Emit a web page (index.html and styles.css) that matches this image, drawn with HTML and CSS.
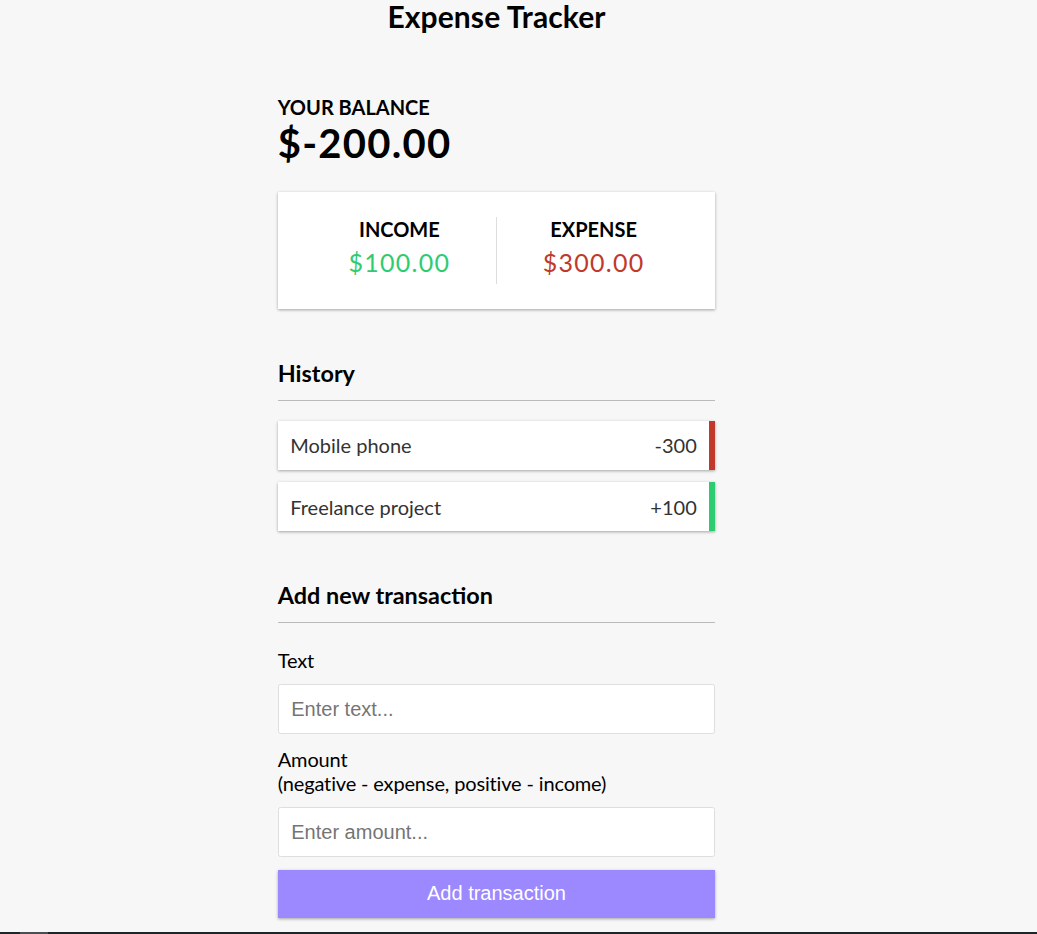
FILE: index.html
```html
<!DOCTYPE html>
<html lang="en">
<head>
<meta charset="utf-8">
<title>Expense Tracker</title>
<link rel="stylesheet" href="styles.css">
</head>
<body>
<div class="app">
  <h2 class="title">Expense Tracker</h2>
  <div class="container">
    <h4 class="caption">Your Balance</h4>
    <h1 class="balance">$-200.00</h1>

    <div class="inc-exp">
      <div class="inc-exp-col first">
        <h4 class="caption">Income</h4>
        <p class="money plus">$100.00</p>
      </div>
      <div class="inc-exp-col">
        <h4 class="caption">Expense</h4>
        <p class="money minus">$300.00</p>
      </div>
    </div>

    <h3 class="section-title">History</h3>
    <ul class="list">
      <li class="item minus"><span>Mobile phone</span><span>-300</span></li>
      <li class="item plus"><span>Freelance project</span><span>+100</span></li>
    </ul>

    <h3 class="section-title">Add new transaction</h3>
    <form class="form">
      <div class="form-control">
        <label class="label" for="text">Text</label>
        <input class="field" type="text" id="text" placeholder="Enter text...">
      </div>
      <div class="form-control">
        <label class="label" for="amount">Amount <br>(negative - expense, positive - income)</label>
        <input class="field" type="number" id="amount" placeholder="Enter amount...">
      </div>
      <button class="btn" type="button">Add transaction</button>
    </form>
  </div>
</div>
<div class="taskbar"><span class="taskbar-item"></span></div>
</body>
</html>
```

FILE: styles.css
```css
* {
  box-sizing: border-box;
}

html, body {
  margin: 0;
  background-color: #f7f7f7;
  overflow: hidden;
}

body {
  font-family: "Lato", "Noto Sans", sans-serif;
  color: #000;
}

.app {
  width: 993px;
  display: flex;
  flex-direction: column;
  align-items: center;
}

.title {
  margin: 0;
  font-size: 30px;
  line-height: 32px;
  font-weight: 700;
  letter-spacing: 0.1px;
}

.container {
  width: 437.5px;
  margin-top: 62.5px;
}

.caption {
  margin: 0;
  font-size: 20px;
  line-height: 24px;
  font-weight: 700;
  text-transform: uppercase;
}

.balance {
  margin: 0;
  font-size: 40px;
  line-height: 48px;
  font-weight: 700;
  letter-spacing: 1.25px;
}

.inc-exp {
  background-color: #fff;
  box-shadow: 0 1.25px 3.75px rgba(0, 0, 0, 0.12), 0 1.25px 2.5px rgba(0, 0, 0, 0.24);
  padding: 25px;
  display: flex;
  justify-content: space-between;
  margin: 25px 0;
}

.inc-exp-col {
  flex: 1;
  text-align: center;
}

.inc-exp-col.first {
  border-right: 1.25px solid #dedede;
}

.money {
  font-size: 25px;
  line-height: 31px;
  letter-spacing: 1.25px;
  margin: 6.25px 0;
}

.money.plus { color: #2ecc71; }
.money.minus { color: #c0392b; }

.section-title {
  font-size: 23.4px;
  line-height: 28px;
  font-weight: 700;
  border-bottom: 1.25px solid #bbb;
  padding-bottom: 12.5px;
  margin: 50px 0 12.5px;
}

.list {
  list-style: none;
  padding: 0;
  margin: 20px 0 50px;
}

.item {
  background-color: #fff;
  box-shadow: 0 1.25px 3.75px rgba(0, 0, 0, 0.12), 0 1.25px 2.5px rgba(0, 0, 0, 0.24);
  color: #333;
  display: flex;
  justify-content: space-between;
  padding: 12.5px;
  margin: 12.5px 0;
  font-size: 20px;
  line-height: 24px;
}

.item:first-child { margin-top: 0; }
.item:last-child { margin-bottom: 0; }

.item.plus { border-right: 6.25px solid #2ecc71; }
.item.minus { border-right: 6.25px solid #c0392b; }

.form {
  margin: 0;
}

.form-control {
  display: flex;
  flex-direction: column;
}

.label {
  margin: 12.5px 0;
  font-size: 20px;
  line-height: 24px;
  letter-spacing: -0.15px;
}

.field {
  display: block;
  width: 100%;
  font-family: "Liberation Sans", Arial, sans-serif;
  font-size: 20px;
  line-height: 23px;
  padding: 12.5px;
  border: 1.25px solid #dedede;
  border-radius: 2.5px;
  background: #fff;
  color: #000;
  outline: none;
}

.field::placeholder {
  color: #757575;
}

.btn {
  display: block;
  width: 100%;
  cursor: pointer;
  background-color: #9c88ff;
  box-shadow: 0 1.25px 3.75px rgba(0, 0, 0, 0.12), 0 1.25px 2.5px rgba(0, 0, 0, 0.24);
  color: #fff;
  border: 0;
  font-family: "Liberation Sans", Arial, sans-serif;
  font-size: 20px;
  line-height: 23px;
  padding: 12.5px;
  margin: 12.5px 0 37.5px;
}

.taskbar {
  position: fixed;
  left: 0;
  right: 0;
  bottom: 0;
  height: 2px;
  background: #1c2628;
}

.taskbar-item {
  position: absolute;
  left: 20px;
  top: 0;
  width: 28px;
  height: 2px;
  background: #4a5052;
}
```
